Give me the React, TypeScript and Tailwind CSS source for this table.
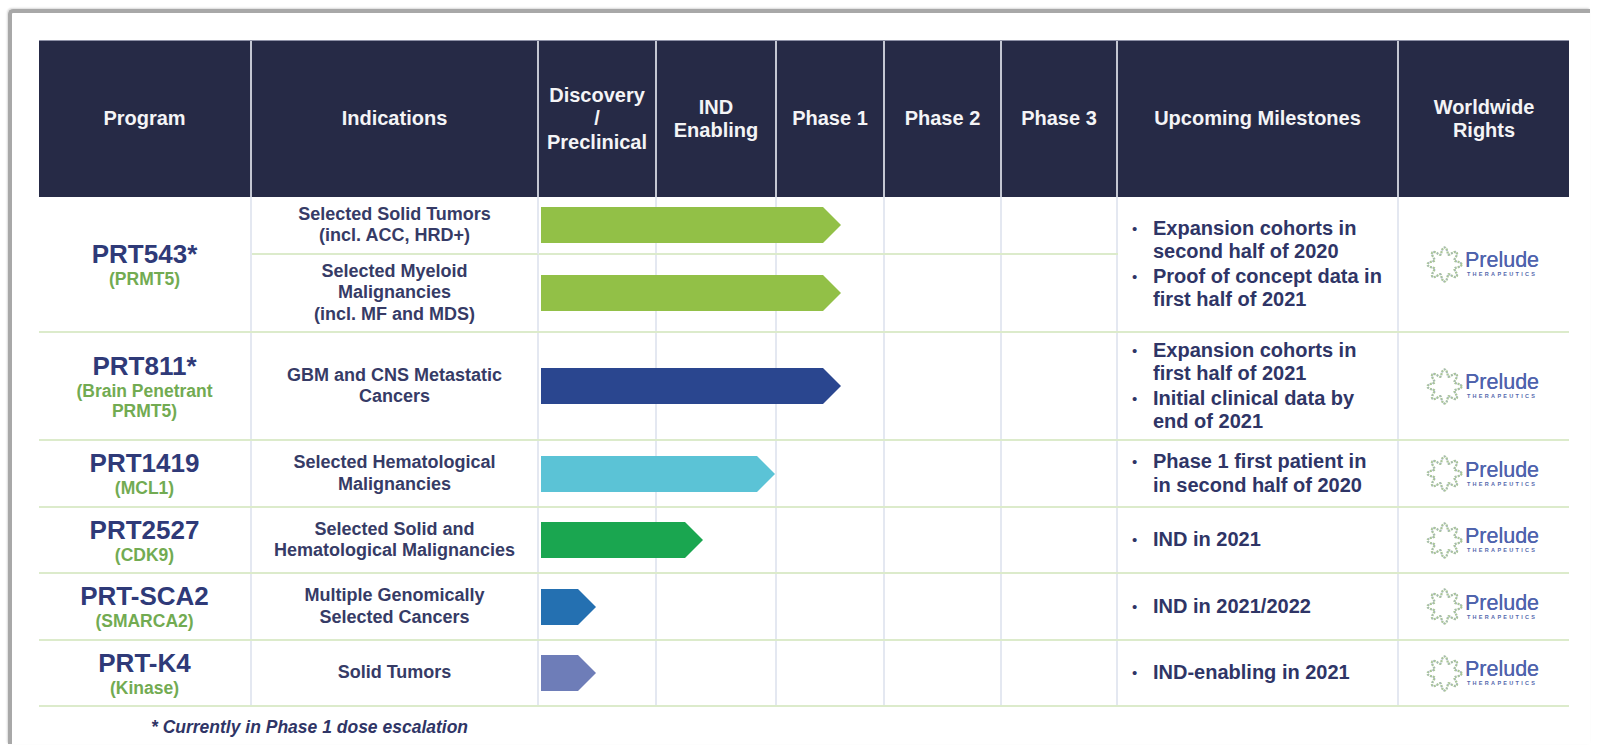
import React from 'react';

const cols = 'grid grid-cols-[213px_287px_118px_120px_108px_117px_116px_281px_170px]';

type Bar = { width: number; color: string };
type Sub = { lines: string[]; bar: Bar };
type Program = {
  name: string;
  sub: string[];
  height: string;
  rows: Sub[];
  milestones: string[][];
};

const programs: Program[] = [
  {
    name: 'PRT543*',
    sub: ['(PRMT5)'],
    height: 'h-[136px] grid-rows-[58px_1fr]',
    rows: [
      { lines: ['Selected Solid Tumors', '(incl. ACC, HRD+)'], bar: { width: 300, color: '#92c047' } },
      { lines: ['Selected Myeloid', 'Malignancies', '(incl. MF and MDS)'], bar: { width: 300, color: '#92c047' } },
    ],
    milestones: [
      ['Expansion cohorts in', 'second half of 2020'],
      ['Proof of concept data in', 'first half of 2021'],
    ],
  },
  {
    name: 'PRT811*',
    sub: ['(Brain Penetrant', 'PRMT5)'],
    height: 'h-[108px]',
    rows: [{ lines: ['GBM and CNS Metastatic', 'Cancers'], bar: { width: 300, color: '#2a468f' } }],
    milestones: [
      ['Expansion cohorts in', 'first half of 2021'],
      ['Initial clinical data by', 'end of 2021'],
    ],
  },
  {
    name: 'PRT1419',
    sub: ['(MCL1)'],
    height: 'h-[67px]',
    rows: [{ lines: ['Selected Hematological', 'Malignancies'], bar: { width: 234, color: '#5bc3d6' } }],
    milestones: [['Phase 1 first patient in', 'in second half of 2020']],
  },
  {
    name: 'PRT2527',
    sub: ['(CDK9)'],
    height: 'h-[66px]',
    rows: [{ lines: ['Selected Solid and', 'Hematological Malignancies'], bar: { width: 162, color: '#1aa650' } }],
    milestones: [['IND in 2021']],
  },
  {
    name: 'PRT-SCA2',
    sub: ['(SMARCA2)'],
    height: 'h-[67px]',
    rows: [{ lines: ['Multiple Genomically', 'Selected Cancers'], bar: { width: 55, color: '#2470b1' } }],
    milestones: [['IND in 2021/2022']],
  },
  {
    name: 'PRT-K4',
    sub: ['(Kinase)'],
    height: 'h-[66px]',
    rows: [{ lines: ['Solid Tumors'], bar: { width: 55, color: '#6e7db8' } }],
    milestones: [['IND-enabling in 2021']],
  },
];

// gear-ish outline for the logo mark
const gearPath = (() => {
  const pts: string[] = [];
  for (let i = 0; i <= 96; i++) {
    const t = (i / 96) * Math.PI * 2;
    const r = 13.5 + 3.2 * Math.cos(8 * t);
    pts.push(`${(19 + r * Math.cos(t)).toFixed(2)},${(19 + r * Math.sin(t)).toFixed(2)}`);
  }
  return 'M' + pts.join('L') + 'Z';
})();

function Logo() {
  return (
    <div className="flex items-center gap-[1px]">
      <svg width="39" height="39" viewBox="0 0 38 38">
        <path d={gearPath} fill="none" stroke="#a9c598" strokeWidth="2.2" strokeDasharray="2 1" />
        <path d={gearPath} fill="none" stroke="#a3aecb" strokeWidth="1.2" strokeDasharray="1 3" strokeDashoffset="1.5" />
      </svg>
      <div className="flex flex-col items-start -mt-[2px]">
        <span className="text-[21.5px] leading-[22px] font-normal text-[#4f63ad] [text-shadow:0_0_0.4px_#4f63ad]">Prelude</span>
        <span className="text-[5.5px] leading-[6px] font-bold tracking-[2.3px] text-[#5467ad] pl-[2px]">THERAPEUTICS</span>
      </div>
    </div>
  );
}

function Arrow({ width, color }: Bar) {
  return (
    <svg width={width} height="36" className="absolute left-[2px] top-1/2 -translate-y-1/2">
      <polygon points={`0,0 ${width - 18},0 ${width},18 ${width - 18},36 0,36`} fill={color} />
    </svg>
  );
}

function PhaseTrack({ bar, divided }: { bar: Bar; divided?: boolean }) {
  return (
    <div className={`col-span-5 relative grid grid-cols-[118px_120px_108px_117px_116px] ${divided ? 'border-b-2 border-[#dcebcb]' : ''}`}>
      <div className="border-r-2 border-[#e4e8f1]" />
      <div className="border-r-2 border-[#e4e8f1]" />
      <div className="border-r-2 border-[#e4e8f1]" />
      <div className="border-r-2 border-[#e4e8f1]" />
      <div className="border-r-2 border-[#e4e8f1]" />
      <Arrow {...bar} />
    </div>
  );
}

function Indication({ lines, divided }: { lines: string[]; divided?: boolean }) {
  return (
    <div
      className={`flex flex-col items-center justify-center text-center text-[18px] leading-[21.5px] font-bold text-[#363b66] border-r-2 border-[#e4e8f1] ${
        divided ? 'border-b-2 border-b-[#dcebcb]' : ''
      }`}
    >
      {lines.map((l) => (
        <span key={l}>{l}</span>
      ))}
    </div>
  );
}

function ProgramRow({ p }: { p: Program }) {
  const span = p.rows.length > 1 ? 'row-span-2' : '';
  return (
    <div className={`${cols} ${p.height} border-b-2 border-[#dcebcb]`}>
      <div className={`${span} flex flex-col items-center justify-center text-center border-r-2 border-[#e4e8f1]`}>
        <span className="text-[26px] leading-[30px] font-bold text-[#2f3a78]">{p.name}</span>
        {p.sub.map((s) => (
          <span key={s} className="text-[17.5px] leading-[20.5px] font-bold text-[#72ab52]">
            {s}
          </span>
        ))}
      </div>
      <Indication lines={p.rows[0].lines} divided={p.rows.length > 1} />
      <PhaseTrack bar={p.rows[0].bar} divided={p.rows.length > 1} />
      <div className={`${span} flex flex-col justify-center gap-[1px] pl-[14px] border-r-2 border-[#e4e8f1]`}>
        {p.milestones.map((m) => (
          <div key={m[0]} className="flex">
            <span className="w-[21px] text-[15px] leading-[23.5px] text-[#2f3566]">•</span>
            <div className="flex flex-col text-[20px] leading-[23.5px] font-bold text-[#2f3566]">
              {m.map((l) => (
                <span key={l}>{l}</span>
              ))}
            </div>
          </div>
        ))}
      </div>
      <div className={`${span} flex items-center justify-center pr-[4px]`}>
        <Logo />
      </div>
      {p.rows.slice(1).map((r) => (
        <React.Fragment key={r.lines[0]}>
          <Indication lines={r.lines} />
          <PhaseTrack bar={r.bar} />
        </React.Fragment>
      ))}
    </div>
  );
}

const headers: string[][] = [
  ['Program'],
  ['Indications'],
  ['Discovery', '/', 'Preclinical'],
  ['IND', 'Enabling'],
  ['Phase 1'],
  ['Phase 2'],
  ['Phase 3'],
  ['Upcoming Milestones'],
  ['Worldwide', 'Rights'],
];

export default function App() {
  return (
    <div className="w-[1600px] h-[750px] bg-white pt-[9px] pl-[8px] overflow-hidden font-['Liberation_Sans',Arial,sans-serif]">
      <div className="w-[1582px] h-[735px] border-t-4 border-l-4 border-[#a8a8a8] rounded-tl-[5px] shadow-[-1px_-1px_2px_rgba(0,0,0,0.15)] pt-[27px] pl-[27px]">
        <div className="w-[1530px]">
          <div className={`${cols} h-[157px] bg-[#262a46] border-t border-[#8d90a6]`}>
            {headers.map((h, i) => (
              <div
                key={h[0]}
                className={`flex flex-col items-center justify-center text-center text-[20px] leading-[23.5px] font-bold text-[#f4f4f6] ${
                  i < headers.length - 1 ? 'border-r-2 border-[#c3c6d2]' : ''
                }`}
              >
                {h.map((l) => (
                  <span key={l}>{l}</span>
                ))}
              </div>
            ))}
          </div>
          {programs.map((p) => (
            <ProgramRow key={p.name} p={p} />
          ))}
          <p className="mt-[10px] pl-[112px] text-[17.5px] leading-[20px] font-bold italic text-[#2f3566]">
            * Currently in Phase 1 dose escalation
          </p>
        </div>
      </div>
    </div>
  );
}
